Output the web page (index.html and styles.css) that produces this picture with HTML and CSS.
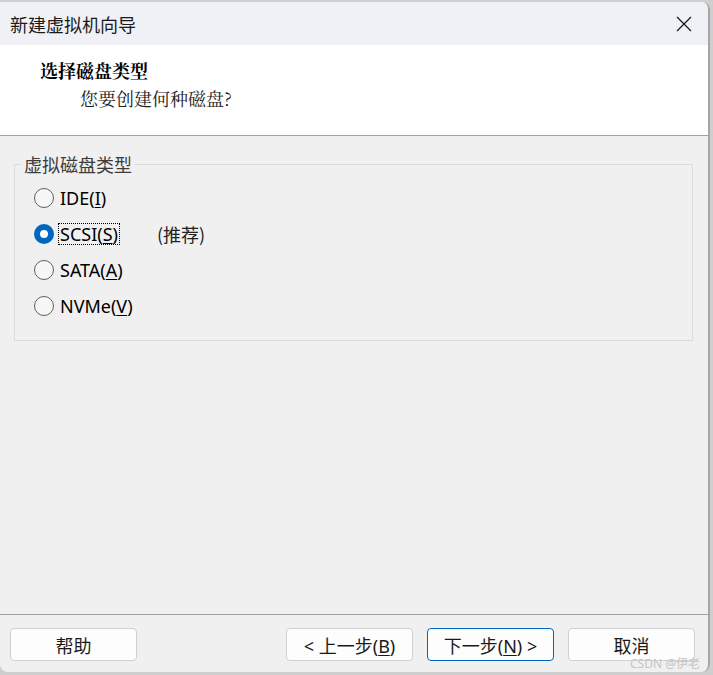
FILE: index.html
```html
<!DOCTYPE html>
<html>
<head>
    <title>新建虚拟机向导</title>
    <link rel="stylesheet" href="styles.css">
</head>
<body>
    <div class="window">
        <div class="titlebar">
            <span class="title">新建虚拟机向导</span>
            <svg class="close" width="16" height="16" viewBox="0 0 16 16">
                <path d="M1 1 L15 15 M15 1 L1 15" stroke="#1a1a1a" stroke-width="1.3" fill="none"/>
            </svg>
        </div>
        <div class="header">
            <h1>选择磁盘类型</h1>
            <p>您要创建何种磁盘?</p>
        </div>
        <div class="content">
            <fieldset class="group">
                <legend>虚拟磁盘类型</legend>
                <div class="option">
                    <span class="radio"></span>
                    <span class="label">IDE(<u>I</u>)</span>
                </div>
                <div class="option">
                    <span class="radio checked"></span>
                    <span class="label focused">SCSI(<u>S</u>)</span>
                    <span class="hint">(推荐)</span>
                </div>
                <div class="option">
                    <span class="radio"></span>
                    <span class="label">SATA(<u>A</u>)</span>
                </div>
                <div class="option">
                    <span class="radio"></span>
                    <span class="label">NVMe(<u>V</u>)</span>
                </div>
            </fieldset>
        </div>
        <div class="footer">
            <button class="btn">帮助</button>
            <span class="spacer"></span>
            <button class="btn">&lt; 上一步(<u>B</u>)</button>
            <button class="btn default">下一步(<u>N</u>) &gt;</button>
            <button class="btn">取消</button>
        </div>
        <div class="watermark">CSDN @伊老</div>
    </div>
</body>
</html>
```

FILE: styles.css
```css
body {
    margin: 0;
    background-color: #cfcfcf;
    font-family: "Noto Sans", "Noto Sans CJK SC", sans-serif;
    color: #1a1a1a;
}

.window {
    position: relative;
    margin-top: 2px;
    width: 708px;
    height: 670px;
    display: flex;
    flex-direction: column;
    background: #f0f0f0;
    border-right: 2px solid #a6a6a6;
    border-radius: 0 8px 8px 8px;
    overflow: hidden;
}

.titlebar {
    height: 43px;
    flex-shrink: 0;
    display: flex;
    align-items: center;
    justify-content: space-between;
    padding: 0 16px 0 10px;
    background: #eff1f6;
}

.title {
    font-family: "Noto Sans CJK SC", sans-serif;
    font-size: 18px;
}

.header {
    height: 91px;
    flex-shrink: 0;
    background: #ffffff;
    border-bottom: 1px solid #a0a0a0;
    padding-top: 13px;
    box-sizing: border-box;
}

.header h1 {
    margin: 0 0 0 40px;
    font-family: "Noto Serif CJK SC", "Noto Sans CJK SC", serif;
    font-size: 18px;
    line-height: 24px;
    font-weight: bold;
    color: #000;
}

.header p {
    margin: 4px 0 0 80px;
    font-family: "Noto Serif CJK SC", "Noto Sans CJK SC", serif;
    font-size: 18px;
    line-height: 24px;
    color: #222;
}

.content {
    flex: 1;
    padding-top: 16px;
}

.group {
    margin: 0 15px 0 14px;
    padding: 4px 0 16px 0;
    border: 1px solid #dcdcdc;
    min-width: 0;
}

.group legend {
    margin-left: 6px;
    padding: 0 3px;
    font-family: "Noto Sans CJK SC", sans-serif;
    font-size: 18px;
    line-height: 24px;
    color: #3c3c3c;
}

.option {
    height: 36px;
    padding-left: 19px;
    display: flex;
    align-items: center;
}

.radio {
    width: 18px;
    height: 18px;
    border: 1px solid #5f5f5f;
    border-radius: 50%;
    background: #f7f7f7;
    flex-shrink: 0;
}

.radio.checked {
    width: 8px;
    height: 8px;
    border: 6px solid #0067c0;
    background: #ffffff;
}

.label {
    margin-left: 4px;
    padding: 0 1px;
    border: 1px dotted transparent;
    font-size: 18px;
    line-height: 20px;
    color: #000;
}

.label.focused {
    border-color: #000;
}

.label u {
    text-underline-offset: 2px;
}

.hint {
    margin-left: 37px;
    font-family: "Noto Sans CJK SC", sans-serif;
    font-size: 18px;
    color: #222;
}

.footer {
    flex-shrink: 0;
    display: flex;
    gap: 14px;
    border-top: 1px solid #a0a0a0;
    padding: 13px 13px 11px 10px;
}

.spacer {
    flex: 1;
}

.btn {
    width: 127px;
    height: 33px;
    background: #fdfdfd;
    border: 1px solid #d0d0d0;
    border-radius: 4px;
    font-family: "Noto Sans", "Noto Sans CJK SC", sans-serif;
    font-size: 18px;
    color: #1a1a1a;
    padding: 0;
}

.btn.default {
    border-color: #0067c0;
}

.btn u {
    text-underline-offset: 2px;
}

.watermark {
    position: absolute;
    right: 8px;
    bottom: 0;
    font-family: "Noto Sans", "Noto Sans CJK SC", sans-serif;
    font-size: 12px;
    color: #c4c4c4;
}
```
